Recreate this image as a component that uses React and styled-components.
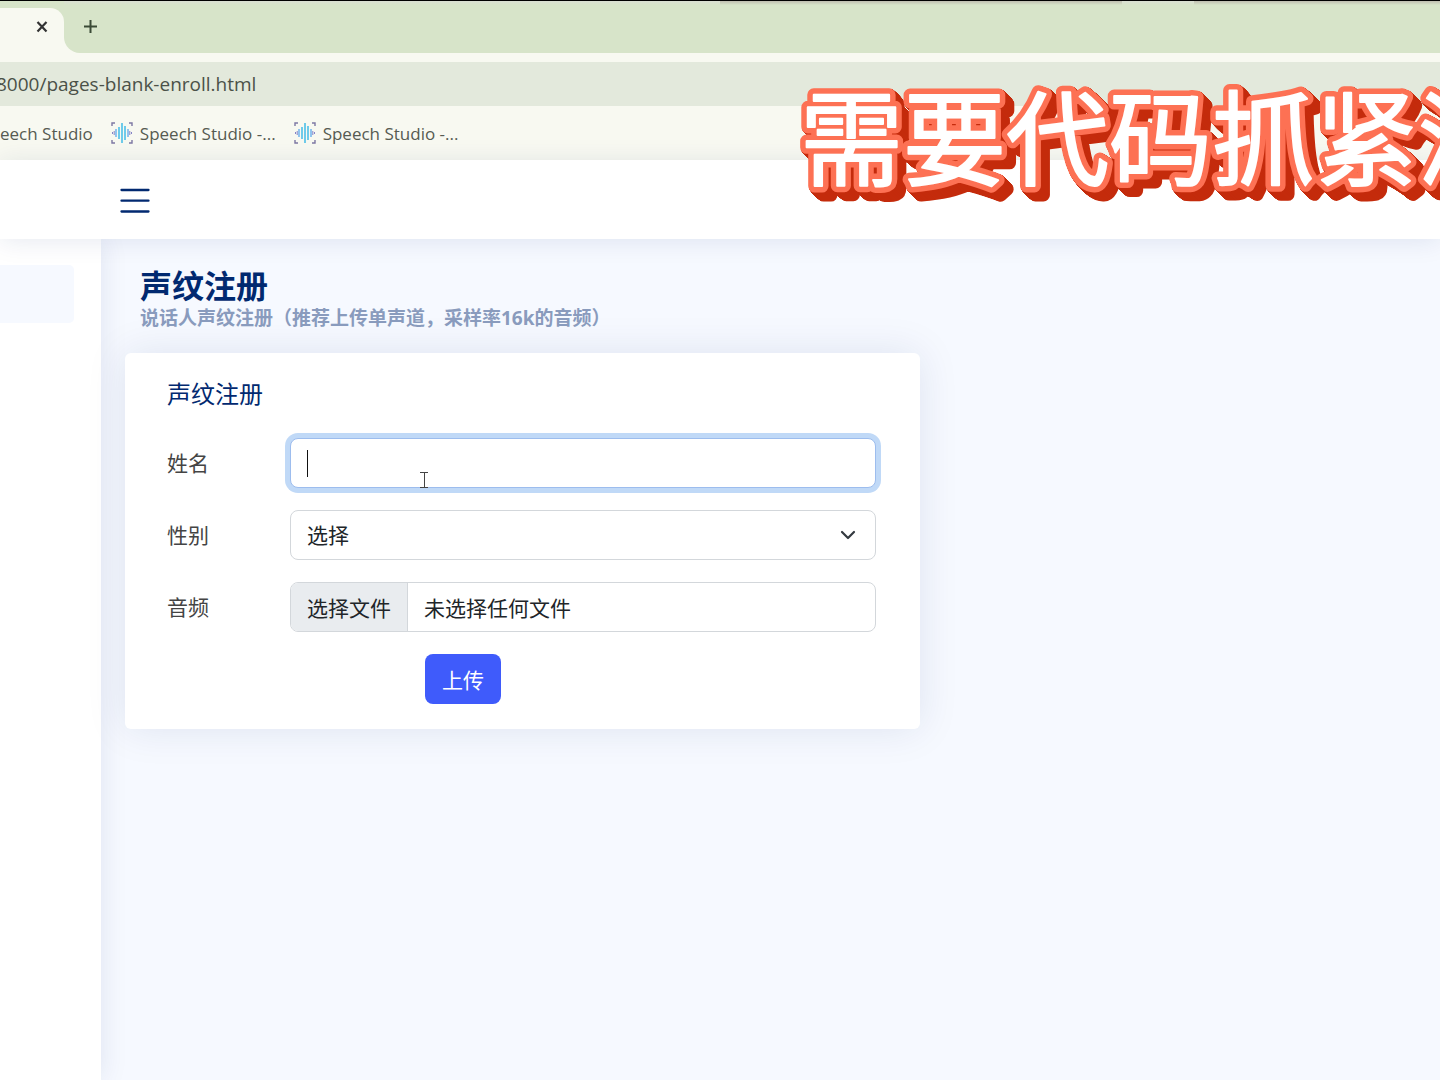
import React from "react";
import styled, { createGlobalStyle } from "styled-components";

const GlobalStyle = createGlobalStyle`
  * {
    box-sizing: border-box;
  }

  body {
    margin: 0;
    overflow: hidden;
    background: #f6f9ff;
    color: #444;
    font-family: "Open Sans", "Noto Sans CJK SC", sans-serif;
  }

  input, select, button {
    font-family: inherit;
  }
`;

const Window = styled.div`
  min-height: 100vh;
  display: flex;
  flex-direction: column;
  position: relative;
  overflow: hidden;
  border-top: 1px solid #000;
`;

/* browser chrome */

const TabStrip = styled.div`
  height: 52px;
  display: flex;
  background: linear-gradient(90deg, #f8f9f1 50%, #d7e4c9 50%);
`;

const Tab = styled.div`
  width: 64px;
  display: flex;
  background: #d7e4c9;
`;

const TabFace = styled.div`
  flex: 1;
  margin-top: 7px;
  padding: 8px 11px 0 0;
  display: flex;
  justify-content: flex-end;
  align-items: flex-start;
  border-top-right-radius: 14px;
  background: #f8f9f1;
`;

const StripRest = styled.div`
  flex: 1;
  padding: 14px 15px 0;
  border-bottom-left-radius: 16px;
  background:
    linear-gradient(#bfbdb0, #d7e4c9) 656px 0 / 402px 4px no-repeat,
    linear-gradient(#bfbdb0, #d7e4c9) 1130px 0 / 100% 4px no-repeat,
    linear-gradient(#dadfd3, #d7e4c9) 0 0 / 100% 4px no-repeat,
    #d7e4c9;
`;

const IconButton = styled.button`
  display: flex;
  padding: 0;
  border: 0;
  background: none;
  color: ${(props) => props.$color || "#333"};
  cursor: pointer;
`;

const Toolbar = styled.div`
  height: 53px;
  padding-top: 9px;
  background: #f8f9f1;
`;

const Address = styled.input`
  display: block;
  width: 100%;
  height: 44px;
  padding: 0 0 1px;
  border: 0;
  outline: 0;
  background: #e3e9dc;
  color: #4b5148;
  font-size: 19px;
  text-indent: -4px;
`;

const Bookmarks = styled.nav`
  height: 54px;
  display: flex;
  align-items: center;
  gap: 18px;
  background: #f8f9f1;
`;

const Bookmark = styled.a`
  display: flex;
  align-items: center;
  gap: 7px;
  color: #565b52;
  font-size: 17px;
  text-decoration: none;
  white-space: nowrap;
`;

/* page */

const Header = styled.header`
  height: 79px;
  padding: 3px 120px 0;
  display: flex;
  align-items: center;
  position: relative;
  z-index: 1;
  background: #fff;
  box-shadow: 0 2px 26px rgba(1, 41, 112, 0.1);
`;

const Body = styled.div`
  flex: 1;
  display: flex;
`;

const Sidebar = styled.aside`
  width: 101px;
  padding: 26px 27px 0 0;
  background: #fff;
  box-shadow: 0 0 26px rgba(1, 41, 112, 0.1);
`;

const SideItem = styled.div`
  height: 58px;
  border-radius: 0 5px 5px 0;
  background: #f6f9ff;
`;

const Main = styled.main`
  flex: 1;
  padding: 28px 24px;
`;

const PageTitle = styled.div`
  padding: 0 15px;
  margin-bottom: 21px;
  font-weight: 700;
`;

const Title = styled.h1`
  margin: 0;
  color: #012970;
  font-size: 32px;
  line-height: 38px;
`;

const SubTitle = styled.p`
  margin: 0;
  color: #899bbd;
  font-size: 19px;
  line-height: 27px;
`;

const Card = styled.section`
  max-width: 795px;
  padding: 25px 44px 25px 42px;
  border-radius: 6px;
  background: #fff;
  box-shadow: 0 0 40px rgba(1, 41, 112, 0.1);
`;

const CardTitle = styled.h2`
  margin: 0 0 28px;
  color: #012970;
  font-size: 24px;
  font-weight: 400;
  line-height: 32px;
`;

const Field = styled.div`
  margin-bottom: 22px;
  display: grid;
  grid-template-columns: 123px 1fr;
  align-items: center;
`;

const Label = styled.label`
  font-size: 21px;
  line-height: 32px;
`;

const Control = styled.div`
  height: 50px;
  display: flex;
  align-items: center;
  position: relative;
  overflow: ${(props) => (props.$clip ? "hidden" : "visible")};
  border: 1px solid ${(props) => (props.$focus ? "#9dbdee" : "#d3d7db")};
  border-radius: 8px;
  background: #fff;
  color: #212529;
  font-size: 21px;
  box-shadow: ${(props) => (props.$focus ? "0 0 0 5px #c0d9f7" : "none")};
`;

const TextInput = styled.input`
  width: 100%;
  height: 100%;
  padding: 0 16px;
  border: 0;
  outline: 0;
  background: none;
  color: inherit;
  font-size: inherit;
`;

const Select = styled.select`
  width: 100%;
  height: 100%;
  padding: 0 16px;
  appearance: none;
  border: 0;
  outline: 0;
  background: none;
  color: inherit;
  font-size: inherit;
`;

const Chevron = styled.svg`
  position: absolute;
  right: 19px;
  pointer-events: none;
`;

const FileInput = styled.input`
  position: absolute;
  inset: 0;
  width: 100%;
  opacity: 0;
`;

const FileButton = styled.span`
  height: 100%;
  padding: 0 16px;
  display: flex;
  align-items: center;
  border-right: 1px solid #d3d7db;
  background: #e9ecef;
`;

const FileName = styled.span`
  padding: 0 16px;
`;

const Caret = styled.span`
  position: absolute;
  left: 16px;
  width: 1px;
  height: 27px;
  background: #111;
`;

const Pointer = styled.svg`
  position: absolute;
  left: 128px;
  top: 32px;
`;

const Actions = styled.div`
  padding-left: 258px;
`;

const Submit = styled.button`
  height: 50px;
  padding: 0 17px;
  display: block;
  border: 0;
  border-radius: 8px;
  background: #3f5bfb;
  color: #fff;
  font-size: 21px;
`;

/* caption floating over the top right corner */

const Caption = styled.svg`
  position: absolute;
  left: 800px;
  top: 69px;
  z-index: 2;
  overflow: visible;
  pointer-events: none;
  font-family: "Noto Sans CJK SC", sans-serif;
  font-size: 103px;
  stroke-linejoin: round;
`;

const CaptionEdge = styled.g`
  fill: #fd7154;
  stroke: #fd7154;
  stroke-width: 13px;
  filter: ${"drop-shadow(1px 1px 0 #c42b0c) ".repeat(9)};
`;

const CaptionFace = styled.g`
  fill: #fff;
  stroke: #fff;
  stroke-width: 2px;
`;

const StudioIcon = () => (
  <svg width="22" height="22" viewBox="0 0 22 22" fill="none" aria-hidden="true">
    <path d="M1 4V1h3M18 1h3v3M21 18v3h-3M4 21H1v-3" stroke="#7d78a4" strokeWidth="1.4" />
    <path d="M11 1v20M8 5v12M14 4v14" stroke="#6ecbea" strokeWidth="2" />
    <path d="M5 7v8M17 7v8" stroke="#79b8ee" strokeWidth="1.6" />
    <path d="M1.500 10v2M20.500 10v2M3.200 9v4M18.800 9v4" stroke="#8583c6" strokeWidth="1" />
  </svg>
);

const App = () => {
  return (
    <>
      <GlobalStyle />
      <Window>
        <TabStrip>
          <Tab>
            <TabFace>
              <IconButton aria-label="关闭标签页">
                <svg width="22" height="22" viewBox="0 0 22 22">
                  <path d="M6.500 6l9 9.500M15.500 6l-9 9.500" stroke="currentColor" strokeWidth="2.200" />
                </svg>
              </IconButton>
            </TabFace>
          </Tab>
          <StripRest>
            <IconButton aria-label="新标签页" $color="#3b4a36">
              <svg width="22" height="24" viewBox="0 0 22 24">
                <path d="M11.500 5v13M5 11.500h13" stroke="currentColor" strokeWidth="2" />
              </svg>
            </IconButton>
          </StripRest>
        </TabStrip>
        <Toolbar>
          <Address aria-label="地址" defaultValue="8000/pages-blank-enroll.html" />
        </Toolbar>
        <Bookmarks>
          <Bookmark href="#">eech Studio</Bookmark>
          <Bookmark href="#">
            <StudioIcon />
            Speech Studio -...
          </Bookmark>
          <Bookmark href="#">
            <StudioIcon />
            Speech Studio -...
          </Bookmark>
        </Bookmarks>

        <Header>
          <IconButton aria-label="菜单" $color="#012970">
            <svg width="30" height="26" viewBox="0 0 30 26">
              <path d="M1.500 2h27M1.500 12.700h27M1.500 23.500h27" stroke="currentColor" strokeWidth="2.300" strokeLinecap="round" />
            </svg>
          </IconButton>
        </Header>

        <Body>
          <Sidebar>
            <SideItem />
          </Sidebar>
          <Main>
            <PageTitle>
              <Title>声纹注册</Title>
              <SubTitle>说话人声纹注册（推荐上传单声道，采样率16k的音频）</SubTitle>
            </PageTitle>
            <Card>
              <CardTitle>声纹注册</CardTitle>
              <form onSubmit={(e) => e.preventDefault()}>
                <Field>
                  <Label htmlFor="name">姓名</Label>
                  <Control $focus>
                    <TextInput id="name" type="text" />
                    <Caret />
                    <Pointer width="10" height="18" viewBox="0 0 10 18" fill="none">
                      <path d="M1 1.500h8M5.500 1.500v15M1 16.500h8" stroke="#444" />
                    </Pointer>
                  </Control>
                </Field>
                <Field>
                  <Label htmlFor="gender">性别</Label>
                  <Control>
                    <Select id="gender">
                      <option>选择</option>
                    </Select>
                    <Chevron width="16" height="10" viewBox="0 0 16 10" fill="none">
                      <path d="M2 2l6 6 6-6" stroke="#343a40" strokeWidth="2.200" strokeLinecap="round" strokeLinejoin="round" />
                    </Chevron>
                  </Control>
                </Field>
                <Field>
                  <Label htmlFor="audio">音频</Label>
                  <Control $clip>
                    <FileButton>选择文件</FileButton>
                    <FileName>未选择任何文件</FileName>
                    <FileInput id="audio" type="file" />
                  </Control>
                </Field>
                <Actions>
                  <Submit type="submit">上传</Submit>
                </Actions>
              </form>
            </Card>
          </Main>
        </Body>

        <Caption width="640" height="150">
          <CaptionEdge>
            <use href="#caption" />
          </CaptionEdge>
          <CaptionFace>
            <text id="caption" x="0" y="108">
              需要代码抓紧滴
            </text>
          </CaptionFace>
        </Caption>
      </Window>
    </>
  );
};

export default App;
